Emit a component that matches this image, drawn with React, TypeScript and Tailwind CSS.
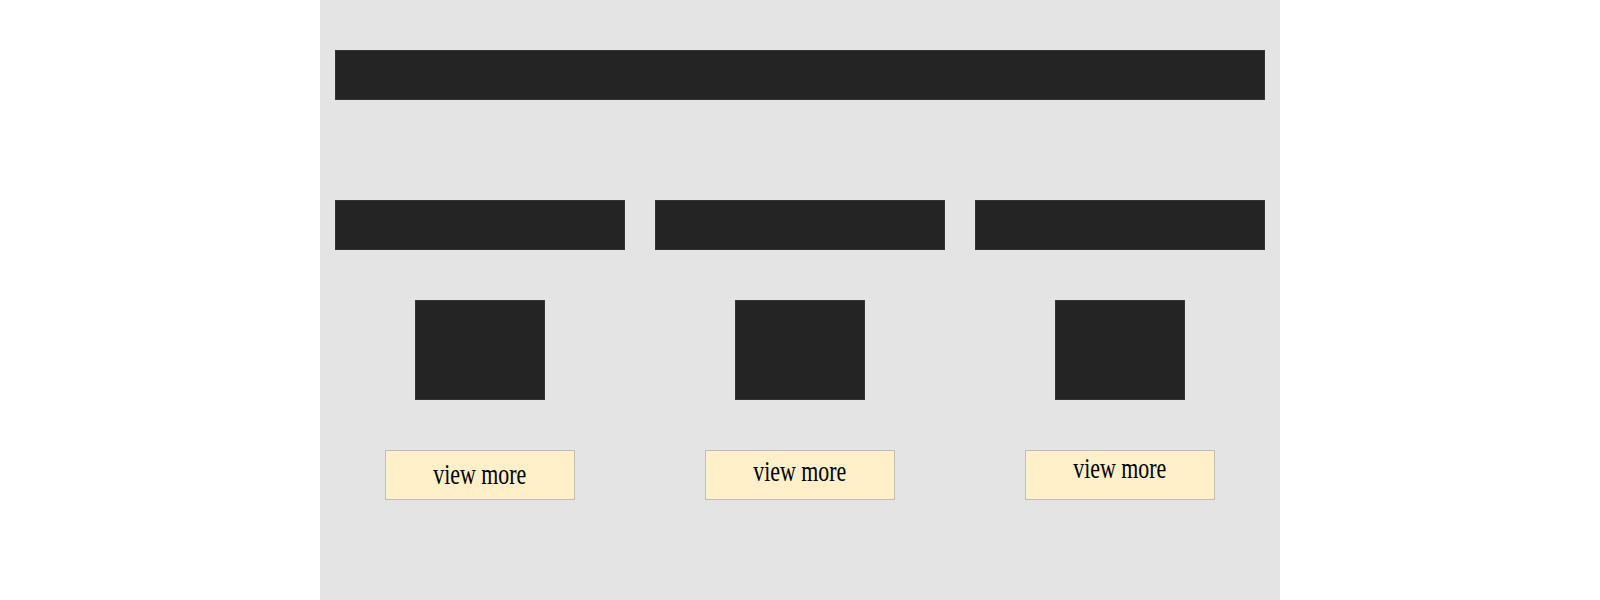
const cards = [
  { id: 1, pad: 'pt-[8px]' },
  { id: 2, pad: 'pt-[5px]' },
  { id: 3, pad: 'pt-[2px]' },
];

function Card({ pad }: { pad: string }) {
  return (
    <div className="flex flex-col items-center">
      <div className="h-[50px] w-full border border-[#333] bg-[#242424]" />
      <div className="mt-[50px] h-[100px] w-[130px] border border-[#333] bg-[#242424]" />
      <button
        className={`mt-[50px] flex h-[50px] w-[190px] items-start justify-center border border-[#bbb] bg-[#fff0c9] font-['Liberation_Serif',serif] text-[30px] leading-[30px] text-black ${pad}`}
      >
        <span className="inline-block scale-x-[0.73] whitespace-nowrap">view more</span>
      </button>
    </div>
  );
}

export default function App() {
  return (
    <div className="min-h-[600px] bg-white">
      <div className="mx-auto min-h-[600px] w-[960px] bg-[#e4e4e4] px-[15px] pt-[50px]">
        <div className="h-[50px] border border-[#333] bg-[#242424]" />
        <div className="mt-[100px] grid grid-cols-3 gap-[30px]">
          {cards.map((c) => (
            <Card key={c.id} pad={c.pad} />
          ))}
        </div>
      </div>
    </div>
  );
}
